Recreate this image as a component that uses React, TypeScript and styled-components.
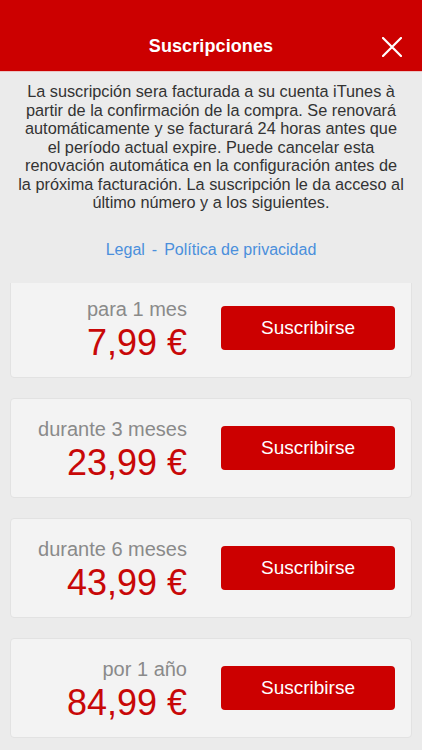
import styled, { createGlobalStyle } from "styled-components";

const GlobalStyle = createGlobalStyle`
  html, body {
    margin: 0;
    padding: 0;
    background: #ebebeb;
  }
  * {
    box-sizing: border-box;
  }
`;

const ThemeRed = "#cc0000";

type Plan = {
  period: string;
  price: string;
};

const plans: Plan[] = [
  { period: "para 1 mes", price: "7,99 €" },
  { period: "durante 3 meses", price: "23,99 €" },
  { period: "durante 6 meses", price: "43,99 €" },
  { period: "por 1 año", price: "84,99 €" },
];

const Page = styled.div`
  width: 422px;
  height: 750px;
  display: flex;
  flex-direction: column;
  background: #ebebeb;
  font-family: "Liberation Sans", Arial, sans-serif;
  overflow: hidden;
`;

const Header = styled.header`
  flex-shrink: 0;
  height: 72px;
  padding-top: 22px;
  background: ${ThemeRed};
  border-bottom: 1px solid #e9c4c4;
`;

const NavBar = styled.div`
  position: relative;
  height: 49px;
  display: flex;
  align-items: center;
  justify-content: center;
`;

const Title = styled.h1`
  margin: 0;
  color: #fff;
  font-size: 18px;
  font-weight: 700;
  letter-spacing: 0.1px;
`;

const CloseButton = styled.button`
  position: absolute;
  right: 18px;
  top: 50%;
  transform: translateY(-50%);
  width: 24px;
  height: 24px;
  padding: 0;
  border: none;
  background: none;
  display: flex;
  align-items: center;
  justify-content: center;
`;

const Intro = styled.p`
  margin: 0;
  padding: 10px 8px 0;
  text-align: center;
  color: #333;
  font-size: 16.3px;
  line-height: 18.5px;
`;

const Links = styled.div`
  margin-top: 28px;
  text-align: center;
  font-size: 16px;
  line-height: 20px;
  color: #4a8fdc;
`;

const Dash = styled.span`
  margin: 0 7px;
`;

const Scroller = styled.div`
  flex: 1;
  margin-top: 23px;
  overflow: hidden;
`;

const List = styled.div`
  margin-top: -5px;
  padding: 0 10px;
  display: flex;
  flex-direction: column;
  gap: 20px;
`;

const Card = styled.div`
  height: 100px;
  display: flex;
  align-items: center;
  gap: 34px;
  padding-right: 16px;
  background: #f3f3f3;
  border: 1px solid #e2e2e2;
  border-radius: 4px;
`;

const PriceBlock = styled.div`
  flex: 1;
  text-align: right;
  padding-top: 4px;
`;

const Period = styled.div`
  color: #8a8a8a;
  font-size: 20px;
  line-height: 24px;
`;

const Price = styled.div`
  margin-top: 2px;
  color: #c80808;
  font-size: 36px;
  line-height: 40px;
`;

const SubscribeButton = styled.button`
  width: 174px;
  height: 44px;
  flex-shrink: 0;
  border: none;
  border-radius: 4px;
  background: ${ThemeRed};
  color: #fff;
  font-family: inherit;
  font-size: 19px;
`;

function App() {
  return (
    <>
      <GlobalStyle />
      <Page>
        <Header>
          <NavBar>
            <Title>Suscripciones</Title>
            <CloseButton aria-label="Cerrar">
              <svg width="20" height="20" viewBox="0 0 20 20">
                <path d="M1 1 L19 19 M19 1 L1 19" stroke="#fff" strokeWidth="2.2" strokeLinecap="round" />
              </svg>
            </CloseButton>
          </NavBar>
        </Header>
        <Intro>
          La suscripción sera facturada a su cuenta iTunes à<br />
          partir de la confirmación de la compra. Se renovará<br />
          automáticamente y se facturará 24 horas antes que<br />
          el período actual expire. Puede cancelar esta<br />
          renovación automática en la configuración antes de<br />
          la próxima facturación. La suscripción le da acceso al<br />
          último número y a los siguientes.
        </Intro>
        <Links>
          Legal<Dash>-</Dash>Política de privacidad
        </Links>
        <Scroller>
          <List>
            {plans.map((plan) => (
              <Card key={plan.period}>
                <PriceBlock>
                  <Period>{plan.period}</Period>
                  <Price>{plan.price}</Price>
                </PriceBlock>
                <SubscribeButton>Suscribirse</SubscribeButton>
              </Card>
            ))}
          </List>
        </Scroller>
      </Page>
    </>
  );
}

export default App;
